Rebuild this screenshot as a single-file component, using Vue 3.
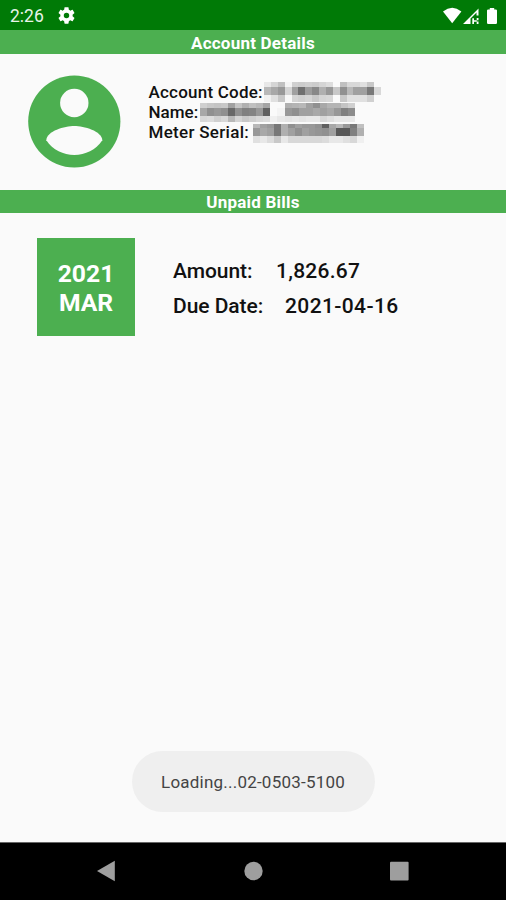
<script setup>
const masks = {
  code: {
    heights: [5, 8, 7],
    rows: [
      'e8 d5 c0 f4 d0 cc d0 cc d5 dd fa c0 d8 d8 e0 c8 fa',
      'b8 a8 98 d5 a0 70 9c 88 b0 98 c8 90 b8 a0 a0 78 d8',
      'f0 e0 c8 f8 d5 d0 d5 c8 d5 d8 fa c8 e0 e0 e0 d0 fa',
    ],
  },
  name: {
    heights: [5, 8, 6],
    rows: [
      'd0 c8 c4 c8 a0 c4 b0 c0 b8 a4 fa fa b0 b4 b8 a0 90 a8 b4 b4 c4 d0',
      'a8 90 98 90 68 90 80 84 98 60 fa f4 98 90 a0 a0 a8 a0 a8 98 80 8c',
      'd8 dc d0 d8 b8 d4 c8 d0 d8 dc f0 e8 e4 e8 e4 e8 e8 d8 e0 e8 e8 e8',
    ],
  },
  meter: {
    heights: [4, 8, 7],
    rows: [
      'b8 a0 98 78 b0 90 a0 98 98 90 60 a8 b8 98 78 c0',
      '98 a8 a0 78 b0 a0 90 a0 98 94 90 a0 58 58 80 b0',
      'e0 e8 dc c8 e8 d8 d8 d8 d8 d8 dc e8 e8 e0 d8 f0',
    ],
  },
}

const tiles = Object.fromEntries(
  Object.entries(masks).map(([key, { heights, rows }]) => {
    let y = 0
    const cells = []
    rows.forEach((row, r) => {
      row.split(' ').forEach((c, i) => cells.push({ x: i * 7, y, h: heights[r], fill: `#${c}${c}${c}` }))
      y += heights[r]
    })
    return [key, { cells, w: rows[0].split(' ').length * 7, h: y }]
  })
)

const details = [
  { label: 'Account Code:', mask: 'code' },
  { label: 'Name:', mask: 'name' },
  { label: 'Meter Serial:', mask: 'meter' },
]
</script>

<template>
  <div class="screen">
    <header class="status">
      <span class="time">2:26</span>
      <svg class="gear" viewBox="2 2 20 20" width="17" height="17">
        <path fill="#fff" d="M19.14 12.94c.04-.3.06-.61.06-.94s-.02-.64-.07-.94l2.03-1.58c.18-.14.23-.41.12-.61l-1.92-3.32c-.12-.22-.37-.29-.59-.22l-2.39.96c-.5-.38-1.03-.7-1.62-.94l-.36-2.54c-.04-.24-.24-.41-.48-.41h-3.84c-.24 0-.43.17-.47.41l-.36 2.54c-.59.24-1.13.57-1.62.94l-2.39-.96c-.22-.08-.47 0-.59.22L2.74 8.87c-.12.21-.08.47.12.61l2.03 1.58c-.05.3-.09.63-.09.94s.02.64.07.94l-2.03 1.58c-.18.14-.23.41-.12.61l1.92 3.32c.12.22.37.29.59.22l2.39-.96c.5.38 1.03.7 1.62.94l.36 2.54c.05.24.24.41.48.41h3.84c.24 0 .44-.17.47-.41l.36-2.54c.59-.24 1.13-.56 1.62-.94l2.39.96c.22.08.47 0 .59-.22l1.92-3.32c.12-.22.07-.47-.12-.61l-2.01-1.58zM12 15.2a3.2 3.2 0 1 1 0-6.4 3.2 3.2 0 0 1 0 6.4z" />
      </svg>
      <svg class="indicators" viewBox="0 0 56 18" width="56" height="18">
        <path fill="#fff" d="M0 4.5Q9.2-2.8 18.4 4.5L9.2 16.2Z" />
        <path fill="#fff" fill-rule="evenodd" d="M20 17L35.5 1.5V8.5H33.5V5.5L27.5 11.5V17ZM29.3 11.2h1.7v5.8h-1.7zM31 13.2h2.7v1.5h-2.7zM33.7 11h1.8v2.3h-1.8zM33.7 14.5h1.8v2.5h-1.8z" />
        <path fill="#fff" d="M44 3.6q0-1.2 1.2-1.2h1.6V1h4.4v1.4h1.6q1.2 0 1.2 1.2v12.2q0 1.2-1.2 1.2h-7.6q-1.2 0-1.2-1.2Z" />
      </svg>
    </header>

    <h2 class="bar">Account Details</h2>
    <section class="account">
      <svg class="avatar" viewBox="0 0 93 93" width="93" height="93">
        <circle cx="46.3" cy="46.5" r="46.1" fill="#4caf50" />
        <circle cx="46.3" cy="28" r="14.2" fill="#fafafa" />
        <path fill="#fafafa" d="M18.3 65.3C18.6 56 36.8 51 46.3 51S74 56 74.3 65.3C67.8 75 57.3 80 46.3 80S24.8 75 18.3 65.3Z" />
      </svg>
      <div class="details">
        <div v-for="d in details" :key="d.mask" class="detail">
          <span class="label" :class="d.mask">{{ d.label }}</span>
          <svg class="mask" :class="d.mask" :viewBox="`0 0 ${tiles[d.mask].w} ${tiles[d.mask].h}`" :width="tiles[d.mask].w" :height="tiles[d.mask].h" preserveAspectRatio="none" shape-rendering="crispEdges">
            <rect v-for="(c, i) in tiles[d.mask].cells" :key="i" :x="c.x" :y="c.y" width="7" :height="c.h" :fill="c.fill" />
          </svg>
        </div>
      </div>
    </section>

    <h2 class="bar bills-title">Unpaid Bills</h2>
    <main class="bills">
      <div class="month"><span>2021</span><span>MAR</span></div>
      <div class="bill">
        <div class="line"><span class="key amount">Amount:</span><span class="value">1,826.67</span></div>
        <div class="line"><span class="key due">Due Date:</span><span class="value date">2021-04-16</span></div>
      </div>
    </main>

    <div class="toast">Loading...02-0503-5100</div>

    <nav class="nav">
      <svg viewBox="0 0 506 57" width="506" height="57">
        <path fill="#9e9e9e" d="M97 28L114.8 17.7V38.3Z" />
        <circle cx="253.5" cy="28" r="9.2" fill="#9e9e9e" />
        <rect x="390" y="18.8" width="18.6" height="18.6" rx="1" fill="#9e9e9e" />
      </svg>
    </nav>
  </div>
</template>

<style>
body { margin: 0; }
</style>

<style scoped>
.screen {
  width: 506px;
  height: 900px;
  display: flex;
  flex-direction: column;
  overflow: hidden;
  background: #fafafa;
  color: #111;
  font-family: Roboto, sans-serif;
}
.status {
  height: 30px;
  flex: none;
  display: flex;
  align-items: center;
  box-sizing: border-box;
  padding: 1px 9px 0 10px;
  background: #007a06;
}
.time { width: 48px; font-size: 17.5px; line-height: 30px; color: #e8f4e8; padding-top: 1px; }
.indicators { margin-left: auto; margin-right: -2px; }
.bar {
  margin: 0;
  height: 24px;
  flex: none;
  background: #4caf50;
  color: #fff;
  text-align: center;
  font-size: 17px;
  font-weight: 700;
  letter-spacing: 0.22px;
  line-height: 26px;
}
.account {
  height: 136px;
  flex: none;
  display: flex;
  align-items: flex-start;
  box-sizing: border-box;
  padding: 21px 0 0 28px;
}
.details { padding: 7px 0 0 27.5px; }
.detail { height: 20px; display: flex; align-items: flex-start; white-space: nowrap; }
.label { font-size: 17px; font-weight: 500; line-height: 20px; letter-spacing: 0.22px; }
.label.code { width: 115.5px; }
.label.name { width: 51.5px; letter-spacing: 0; }
.label.meter { width: 104.5px; letter-spacing: 0.3px; }
.mask { flex: none; }
.mask.code { width: 117px; }
.mask.name { width: 155px; margin-top: 1px; }
.mask.meter { width: 111px; margin-top: 2px; }
.bills-title { height: 23px; line-height: 25px; }
.bills { display: flex; flex: 1; align-items: flex-start; padding: 25px 0 0 37px; }
.month {
  width: 98px;
  height: 98px;
  display: flex;
  flex-direction: column;
  align-items: center;
  justify-content: center;
  box-sizing: border-box;
  padding-top: 2px;
  background: #4caf50;
  color: #fff;
  font-size: 24.7px;
  font-weight: 700;
  line-height: 29px;
}
.bill { padding: 16px 0 0 38px; font-size: 21px; font-weight: 500; }
.line { height: 35px; line-height: 35px; display: flex; white-space: nowrap; }
.key { letter-spacing: -0.05px; }
.value { letter-spacing: 0.25px; }
.date { letter-spacing: 0.38px; }
.amount { width: 103px; }
.due { width: 112px; }
.toast {
  align-self: center;
  width: 243px;
  height: 61px;
  flex: none;
  margin-bottom: 30px;
  border-radius: 31px;
  background: #efefef;
  color: #444;
  font-size: 17px;
  letter-spacing: 0.22px;
  line-height: 62px;
  text-align: center;
}
.nav { height: 57px; flex: none; background: #000; border-top: 1px solid #666; }
.nav svg { display: block; }
</style>
